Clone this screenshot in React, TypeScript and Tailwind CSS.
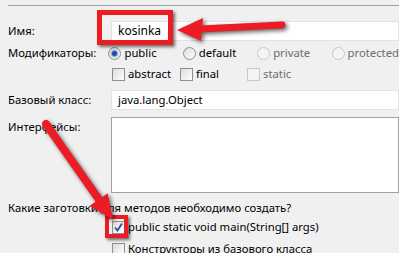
import React from "react";

const font = { fontFamily: '"Noto Sans", "Segoe UI", sans-serif' };

function Radio({ checked, disabled }: { checked?: boolean; disabled?: boolean }) {
  return (
    <span
      className={
        "relative flex h-[13px] w-[13px] items-center justify-center rounded-full border " +
        (disabled
          ? "border-[#c8c8c8] bg-[#f4f4f4]"
          : "border-[#8e8f8f] bg-gradient-to-br from-[#dcdcdc] to-[#ffffff]")
      }
    >
      {checked && <span className="h-[5px] w-[5px] rounded-full bg-[#1f4fa0] shadow-[0_0_2px_1px_#6b9bd8]" />}
    </span>
  );
}

function Check({ checked, disabled }: { checked?: boolean; disabled?: boolean }) {
  return (
    <span
      className={
        "relative flex h-[13px] w-[13px] shrink-0 items-center justify-center border " +
        (disabled
          ? "border-[#c8c8c8] bg-[#f4f4f4]"
          : "border-[#8e8f8f] bg-gradient-to-br from-[#dcdcdc] to-[#ffffff]")
      }
    >
      {checked && (
        <svg width="11" height="11" viewBox="0 0 11 11">
          <path d="M2 5.5 L4.5 8.5 L9 1.5" fill="none" stroke="#2a4a9a" strokeWidth="1.8" />
        </svg>
      )}
    </span>
  );
}

export default function App() {
  return (
    <div
      className="relative h-[253px] w-[399px] overflow-hidden bg-[#f0f0f0] pl-[8px] text-[11.3px] text-[#000]"
      style={font}
    >
      <div className="mt-[5px] h-px bg-[#a0a0a0]" />

      <div className="mt-[15px] flex h-[20px] items-center">
        <span className="w-[103px]">Имя:</span>
        <div className="flex h-[20px] flex-1 items-center border border-[#e3e3e3] bg-white pl-[6px] text-[12px]">kosinka</div>
      </div>

      <div className="mt-[4px] flex h-[16px] items-center">
        <span className="w-[104px]">Модификаторы:</span>
        <div className="flex w-[77px] items-center gap-[3px]">
          <Radio checked />
          <span>public</span>
        </div>
        <div className="flex w-[77px] items-center gap-[3px]">
          <Radio />
          <span>default</span>
        </div>
        <div className="flex w-[77px] items-center gap-[3px] text-[#6d6d6d]">
          <Radio disabled />
          <span>private</span>
        </div>
        <div className="flex items-center gap-[3px] whitespace-nowrap text-[#6d6d6d]">
          <Radio disabled />
          <span>protected</span>
        </div>
      </div>

      <div className="mt-[5px] flex h-[16px] items-center pl-[104px]">
        <div className="flex w-[68px] items-center gap-[3px]">
          <Check />
          <span>abstract</span>
        </div>
        <div className="flex w-[67px] items-center gap-[3px]">
          <Check />
          <span>final</span>
        </div>
        <div className="flex items-center gap-[3px] text-[#6d6d6d]">
          <Check disabled />
          <span>static</span>
        </div>
      </div>

      <div className="mt-[8px] flex h-[20px] items-center">
        <span className="w-[103px]">Базовый класс:</span>
        <div className="flex h-[20px] flex-1 items-center border border-[#e3e3e3] bg-white pl-[6px]">java.lang.Object</div>
      </div>

      <div className="mt-[7px] flex h-[76px]">
        <span className="w-[103px] pt-[2px]">Интерфейсы:</span>
        <div className="flex-1 border border-[#a0a0a0] bg-white" />
      </div>

      <div className="mt-[7px] flex h-[16px] items-center">Какие заготовки для методов необходимо создать?</div>

      <div className="mt-[3px] flex h-[16px] items-center gap-[3px] pl-[104px]">
        <Check checked />
        <span>public static void main(String[] args)</span>
      </div>

      <div className="mt-[6px] flex h-[16px] items-center gap-[3px] pl-[104px]">
        <Check />
        <span>Конструкторы из базового класса</span>
      </div>

      {/* annotations */}
      <div className="absolute left-[97px] top-[10px] h-[35px] w-[76px] border-[5px] border-[#ec1c24] shadow-[2px_2px_3px_rgba(0,0,0,0.55)]" />
      <div className="absolute left-[105px] top-[215px] h-[23px] w-[23px] border-[4px] border-[#ec1c24] shadow-[2px_2px_3px_rgba(0,0,0,0.55)]" />
      <svg
        className="pointer-events-none absolute left-0 top-0"
        width="399"
        height="253"
        style={{ filter: "drop-shadow(2px 2px 2px rgba(0,0,0,0.6))" }}
      >
        <line x1="200" y1="29" x2="282" y2="25" stroke="#ec1c24" strokeWidth="7" strokeLinecap="round" />
        <polygon points="177,30 203,18 201,41" fill="#ec1c24" />
        <line x1="46" y1="124" x2="100" y2="201" stroke="#ec1c24" strokeWidth="8" strokeLinecap="round" />
        <polygon points="113,220 107.7,193.2 89.7,205.8" fill="#ec1c24" />
      </svg>
    </div>
  );
}
